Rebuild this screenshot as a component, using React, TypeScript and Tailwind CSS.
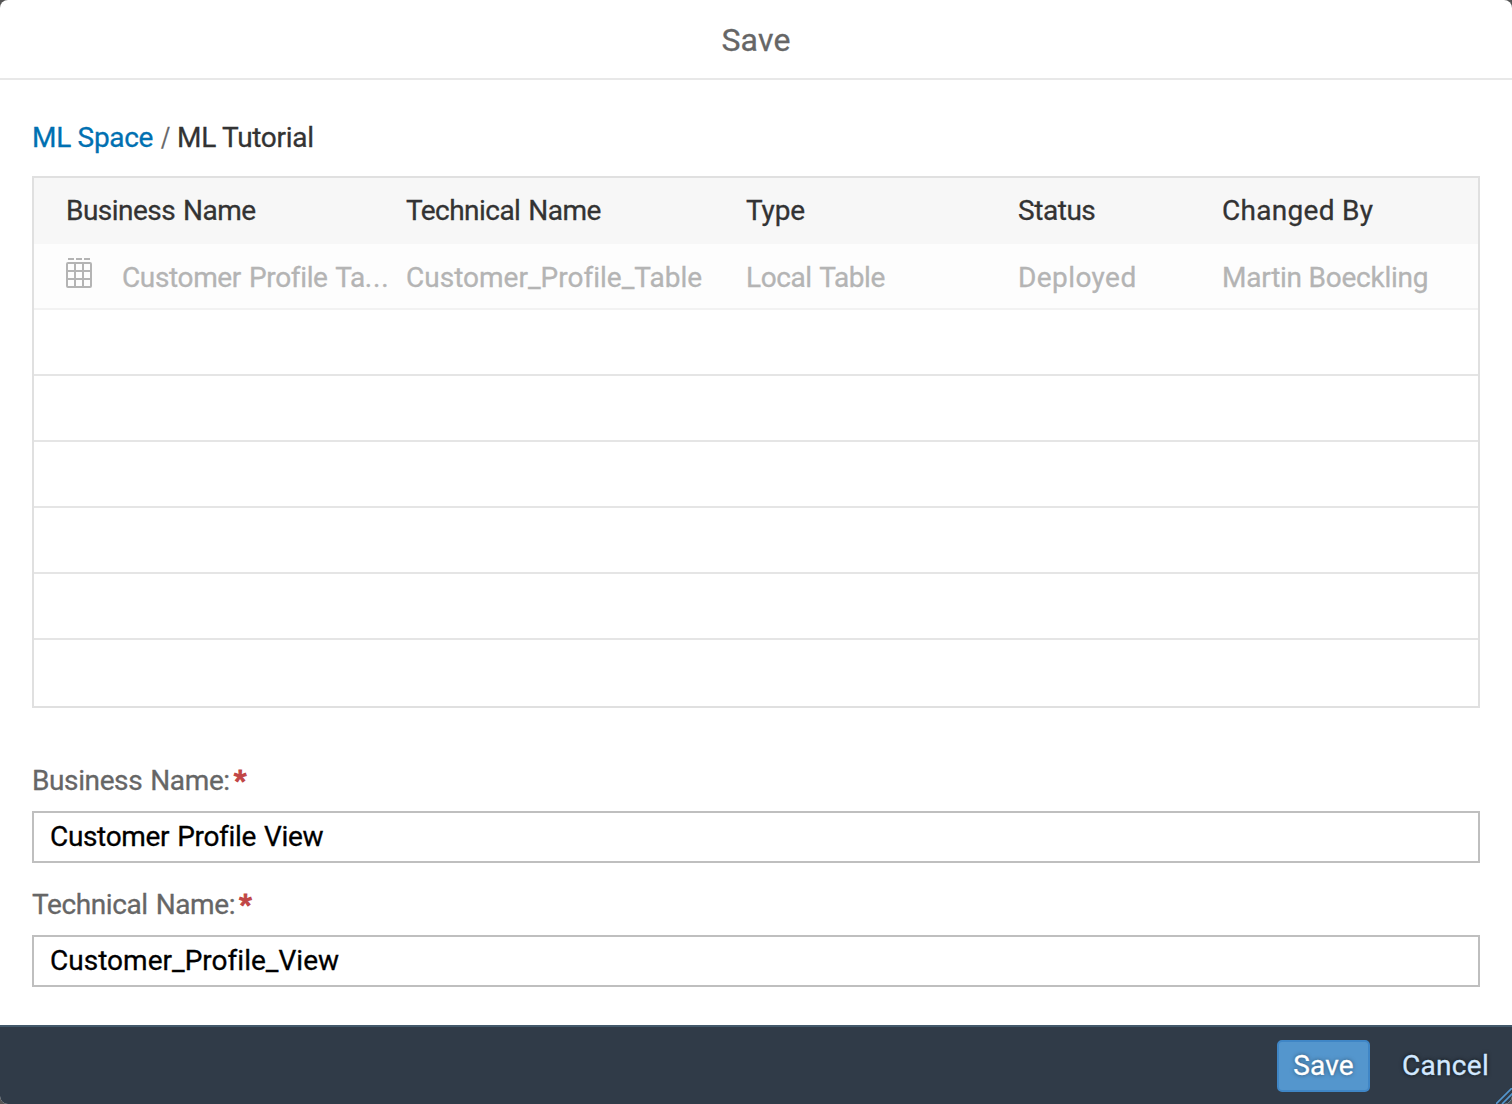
const COLUMNS = [
  { label: 'Business Name', style: 'w-[340px] tracking-[-0.53px]' },
  { label: 'Technical Name', style: 'w-[340px] tracking-[-0.54px]' },
  { label: 'Type', style: 'w-[272px] tracking-[-0.15px]' },
  { label: 'Status', style: 'w-[204px] tracking-[-0.45px]' },
  { label: 'Changed By', style: 'w-[240px] tracking-[0.3px] [word-spacing:0px]' },
];

const ROW = [
  { text: 'Customer_Profile_Table', style: 'w-[340px] tracking-[0.01px]' },
  { text: 'Local Table', style: 'w-[272px] tracking-[-0.41px]' },
  { text: 'Deployed', style: 'w-[204px] tracking-[0.42px]' },
  { text: 'Martin Boeckling', style: 'w-[240px] tracking-[-0.24px] [word-spacing:0px]' },
];

const EMPTY_ROWS = [0, 1, 2, 3, 4];

function TableIcon() {
  return (
    <svg width="26" height="30" viewBox="0 0 26 30" fill="none" stroke="#b4b4b4" strokeWidth="2">
      <path d="M2 1h6M10 1h6M18 1h6" />
      <rect x="1" y="5" width="24" height="24" rx="1" />
      <path d="M9 5v24M17 5v24M1 13h24M1 21h24" />
    </svg>
  );
}

function Field({ label, value, labelStyle, valueStyle }: { label: string; value: string; labelStyle: string; valueStyle: string }) {
  return (
    <div>
      <label className="flex text-[#666]">
        <span className={labelStyle}>{label}</span>
        <span className="ml-1 font-bold text-[#c14646] [-webkit-text-stroke:1px_#c14646]">*</span>
      </label>
      <div className="mt-[14px] h-[52px] border-2 border-[#bfbfbf] bg-white pt-[7px] pl-4 text-black">
        <span className={valueStyle}>{value}</span>
      </div>
    </div>
  );
}

export default function App() {
  return (
    <div className="h-[1104px] w-[1512px] bg-[#555]">
      <div className="flex h-full flex-col overflow-hidden rounded-[8px] bg-white font-['Roboto',sans-serif] text-[28px] leading-[33px] text-[#333] [-webkit-text-stroke:0.3px] [word-spacing:1.5px]">
        <header className="h-20 border-b-2 border-[#e8e8e8] pt-[21px] text-center text-[32px] leading-[38px] tracking-[0.2px] text-[#666]">
          Save
        </header>

        <main className="flex flex-1 flex-col px-8 pt-[41px]">
          <nav className="flex whitespace-pre">
            <a className="w-[129px] tracking-[-0.3px] text-[#0070b1] [word-spacing:0px]">ML Space</a>
            <span className="w-[17px] origin-left scale-x-[0.8] text-[#666]">/</span>
            <span className="-ml-px tracking-[-0.3px] [word-spacing:0px]">ML Tutorial</span>
          </nav>

          <section className="mt-[22px] h-[532px] border-2 border-[#e0e0e0]">
            <div className="flex h-[66px] bg-[#f7f7f7] pt-4 pl-8">
              {COLUMNS.map((c) => (
                <div key={c.label} className={c.style}>{c.label}</div>
              ))}
            </div>
            <div className="flex h-[66px] border-b-2 border-[#f2f2f2] bg-[#fdfdfd] pl-8 text-[#b4b4b4]">
              <div className="flex w-[340px]">
                <div className="w-14 pt-[14px]"><TableIcon /></div>
                <div className="pt-[17px] tracking-[-0.36px]">Customer Profile Ta<span className="tracking-[0.8px]">...</span></div>
              </div>
              {ROW.map((c) => (
                <div key={c.text} className={`pt-[17px] ${c.style}`}>{c.text}</div>
              ))}
            </div>
            {EMPTY_ROWS.map((r) => (
              <div key={r} className="h-[66px] border-b-2 border-[#e5e5e5]" />
            ))}
          </section>

          <div className="mt-14 flex flex-col gap-[25px]">
            <Field label="Business Name:" value="Customer Profile View" labelStyle="tracking-[-0.39px]" valueStyle="tracking-[-0.34px]" />
            <Field label="Technical Name:" value="Customer_Profile_View" labelStyle="tracking-[-0.4px]" valueStyle="tracking-[0.02px]" />
          </div>
        </main>

        <footer className="relative flex h-[79px] justify-end border-t-2 border-[#43596b] bg-[#303b48] pt-[13px]">
          <button className="h-[52px] w-[93px] rounded-[5px] border-2 border-[#3f86c6] bg-[#5496cd] pb-[2px] leading-[33px] tracking-[0.2px] text-white [text-shadow:0_0_4px_rgba(0,0,0,0.5)]">
            Save
          </button>
          <button className="mr-[23px] ml-8 h-[52px] w-[87px] pb-[2px] tracking-[0.3px] text-[#d1e8ff] [text-shadow:0_0_4px_rgba(0,0,0,0.8)]">
            Cancel
          </button>
          <svg className="absolute right-0 bottom-0" width="16" height="16" viewBox="0 0 16 16" fill="none" stroke="#5496cd" strokeWidth="1.6">
            <path d="M0 16L17 -1M6 16L17 5M12 16L17 11" />
          </svg>
        </footer>
      </div>
    </div>
  );
}
